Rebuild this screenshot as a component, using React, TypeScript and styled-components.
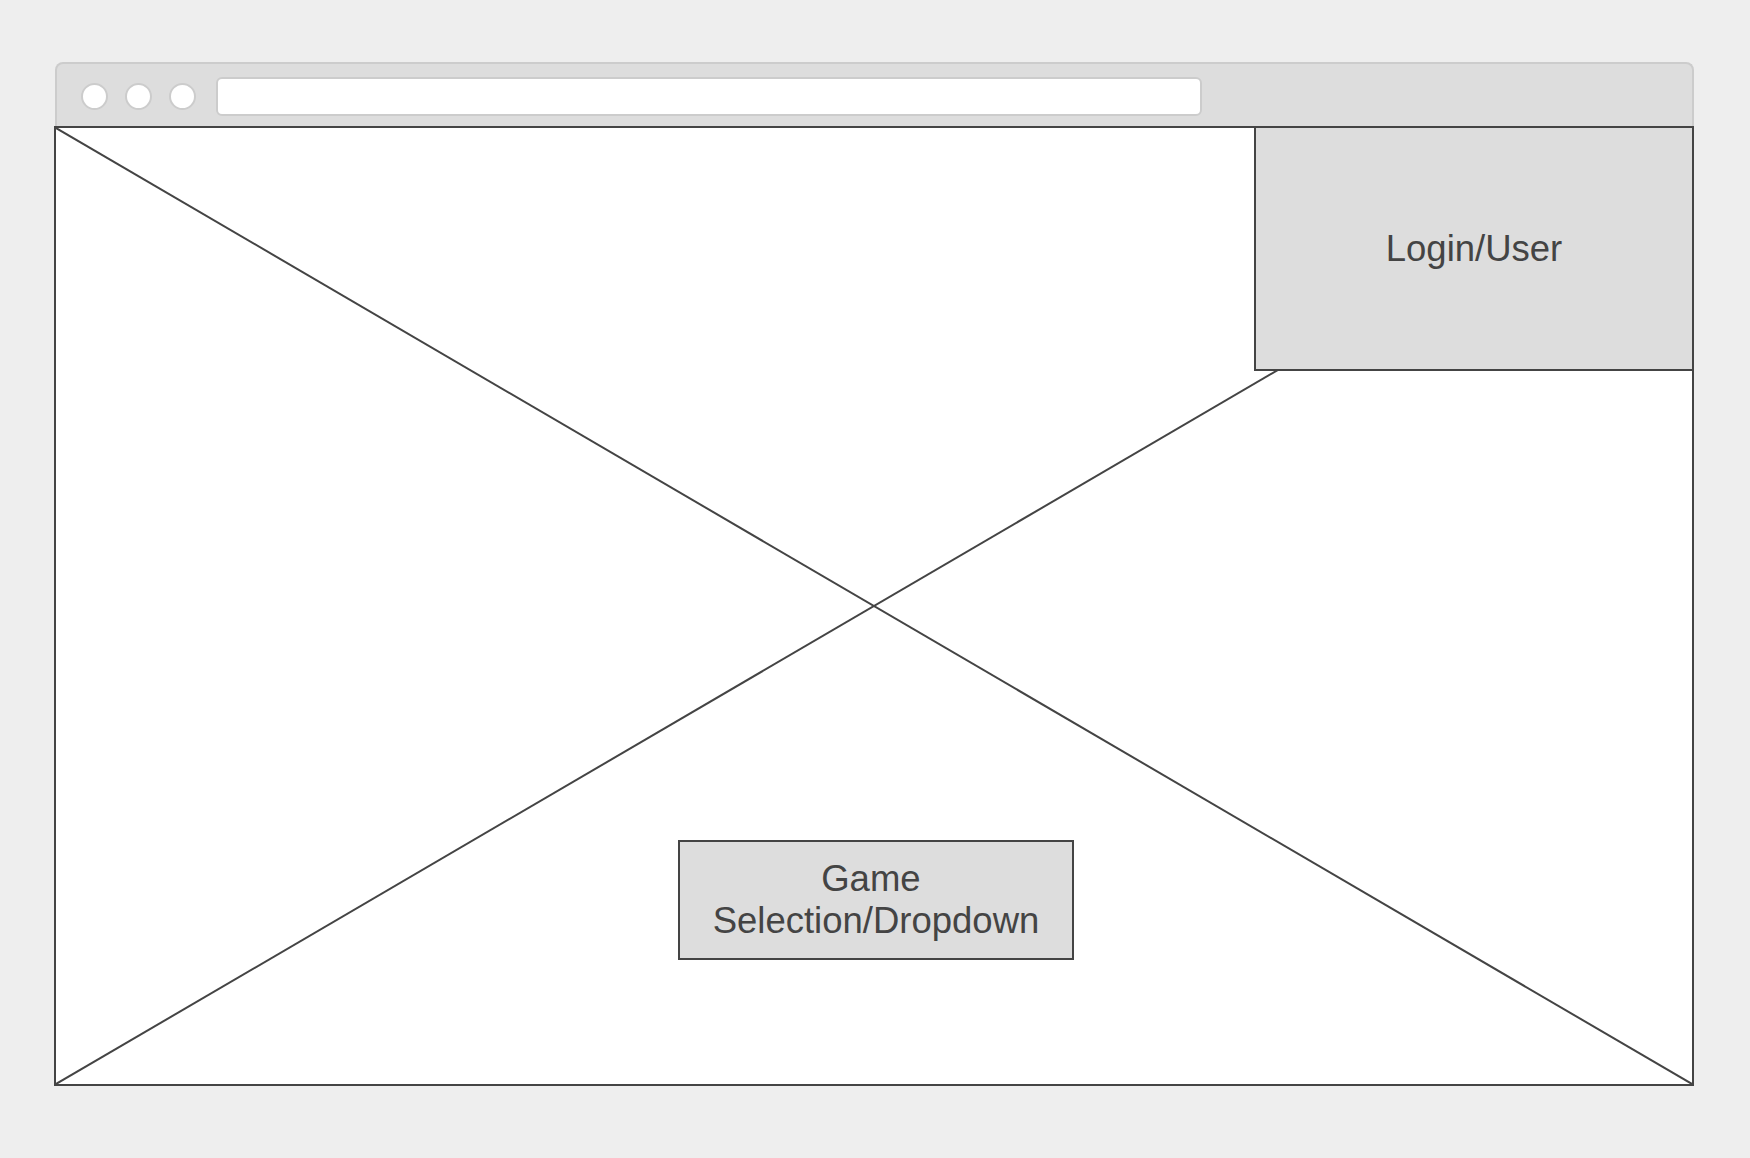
import React from "react";
import styled, { createGlobalStyle } from "styled-components";

const GlobalStyle = createGlobalStyle`
    html, body {
        margin: 0;
        padding: 0;
        background-color: #eeeeee;
        font-family: "Liberation Sans", Arial, sans-serif;
    }
`;

const App = () => {
    return (
        <>
            <GlobalStyle />
            <Page>
                <Window>
                    <TitleBar>
                        <Dots>
                            <Dot />
                            <Dot />
                            <Dot />
                        </Dots>
                        <AddressBar />
                    </TitleBar>
                    <Content>
                        <Cross viewBox="0 0 100 100" preserveAspectRatio="none">
                            <line x1="0" y1="0" x2="100" y2="100" vectorEffect="non-scaling-stroke" />
                            <line x1="0" y1="100" x2="100" y2="0" vectorEffect="non-scaling-stroke" />
                        </Cross>
                        <LoginBox>Login/User</LoginBox>
                        <GameBox>{"Game\u00a0 Selection/Dropdown"}</GameBox>
                    </Content>
                </Window>
            </Page>
        </>
    );
};

const Page = styled.div`
    width: 1750px;
    height: 1158px;
    padding: 62px 0 0 54px;
    box-sizing: border-box;
`;

const Window = styled.div`
    width: 1640px;
    display: flex;
    flex-direction: column;
`;

const TitleBar = styled.div`
    height: 64px;
    box-sizing: border-box;
    margin-left: 1px;
    background-color: #dddddd;
    border: 2px solid #cccccc;
    border-bottom: none;
    border-radius: 8px 8px 0 0;
    display: flex;
    align-items: center;
    padding: 2px 0 0 24px;
`;

const Dots = styled.div`
    display: flex;
    gap: 17px;
`;

const Dot = styled.div`
    width: 27px;
    height: 27px;
    box-sizing: border-box;
    border-radius: 50%;
    background-color: #ffffff;
    border: 2px solid #cccccc;
`;

const AddressBar = styled.div`
    width: 986px;
    height: 39px;
    box-sizing: border-box;
    margin-left: 20px;
    background-color: #ffffff;
    border: 2px solid #cccccc;
    border-radius: 6px;
`;

const Content = styled.div`
    position: relative;
    height: 960px;
    box-sizing: border-box;
    border: 2px solid #444444;
    background-color: #ffffff;
    display: flex;
    flex-direction: column;
`;

const Cross = styled.svg`
    position: absolute;
    inset: 0;
    width: 100%;
    height: 100%;
    z-index: 0;

    line {
        stroke: #444444;
        stroke-width: 2px;
    }
`;

const Label = styled.div`
    position: relative;
    z-index: 1;
    box-sizing: border-box;
    background-color: #dddddd;
    color: #444444;
    font-size: 36.5px;
    display: flex;
    align-items: center;
    justify-content: center;
    text-align: center;
`;

const LoginBox = styled(Label)`
    align-self: flex-end;
    width: 438px;
    height: 243px;
    border-left: 2px solid #444444;
    border-bottom: 2px solid #444444;
`;

const GameBox = styled(Label)`
    align-self: center;
    width: 396px;
    height: 120px;
    margin: 469px 0 0 4px;
    padding: 0 20px;
    line-height: 42px;
    border: 2px solid #444444;
`;

export default App;
